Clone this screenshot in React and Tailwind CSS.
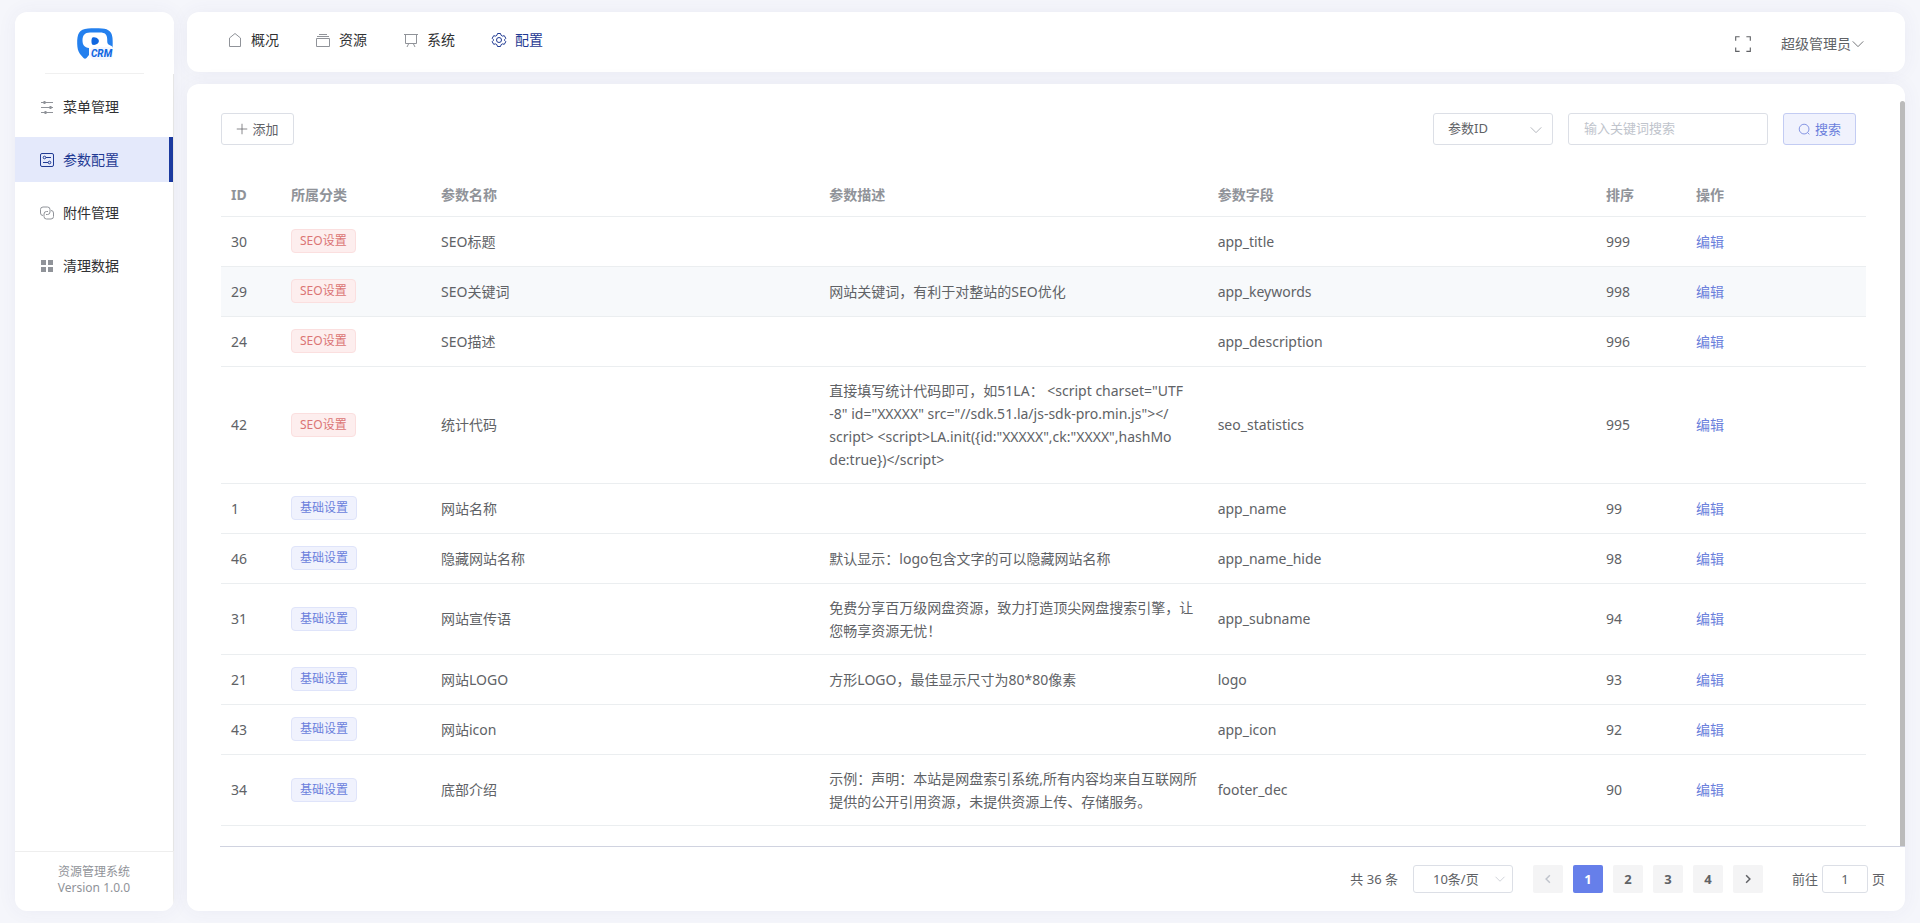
import React, { useState } from 'react';

const NAV_ITEMS = [
  { id: 'overview', label: '概况', icon: HomeIcon },
  { id: 'resource', label: '资源', icon: BoxIcon },
  { id: 'system', label: '系统', icon: BoardIcon },
  { id: 'config', label: '配置', icon: GearIcon },
];

const MENU_ITEMS = [
  { id: 'menu', label: '菜单管理', icon: OperationIcon },
  { id: 'params', label: '参数配置', icon: ParamsIcon },
  { id: 'files', label: '附件管理', icon: LinkIcon },
  { id: 'clean', label: '清理数据', icon: GridIcon },
];

const ROWS = [
  { id: 30, type: 'seo', name: 'SEO标题', desc: '', field: 'app_title', sort: 999 },
  {
    id: 29,
    type: 'seo',
    name: 'SEO关键词',
    desc: '网站关键词，有利于对整站的SEO优化',
    field: 'app_keywords',
    sort: 998,
  },
  { id: 24, type: 'seo', name: 'SEO描述', desc: '', field: 'app_description', sort: 996 },
  {
    id: 42,
    type: 'seo',
    name: '统计代码',
    desc: '直接填写统计代码即可，如51LA： <script charset="UTF\n-8" id="XXXXX" src="//sdk.51.la/js-sdk-pro.min.js"></\nscript> <script>LA.init({id:"XXXXX",ck:"XXXX",hashMo\nde:true})</script>',
    field: 'seo_statistics',
    sort: 995,
  },
  { id: 1, type: 'base', name: '网站名称', desc: '', field: 'app_name', sort: 99 },
  {
    id: 46,
    type: 'base',
    name: '隐藏网站名称',
    desc: '默认显示：logo包含文字的可以隐藏网站名称',
    field: 'app_name_hide',
    sort: 98,
  },
  {
    id: 31,
    type: 'base',
    name: '网站宣传语',
    desc: '免费分享百万级网盘资源，致力打造顶尖网盘搜索引擎，让您畅享资源无忧！',
    field: 'app_subname',
    sort: 94,
  },
  {
    id: 21,
    type: 'base',
    name: '网站LOGO',
    desc: '方形LOGO，最佳显示尺寸为80*80像素',
    field: 'logo',
    sort: 93,
  },
  { id: 43, type: 'base', name: '网站icon', desc: '', field: 'app_icon', sort: 92 },
  {
    id: 34,
    type: 'base',
    name: '底部介绍',
    desc: '示例：声明：本站是网盘索引系统,所有内容均来自互联网所提供的公开引用资源，未提供资源上传、存储服务。',
    field: 'footer_dec',
    sort: 90,
  },
];

function Icon({ className = 'w-4 h-4', children }) {
  return (
    <svg
      className={`shrink-0 ${className}`}
      viewBox="0 0 16 16"
      fill="none"
      stroke="currentColor"
      strokeWidth="1"
      aria-hidden="true"
    >
      {children}
    </svg>
  );
}

function HomeIcon() {
  return (
    <Icon>
      <path d="M2.500 14.500V6L8 1.500 13.500 6v8.500z" />
    </Icon>
  );
}

function BoxIcon() {
  return (
    <Icon>
      <path d="M1.500 6.500h13v8h-13zM2 4.500h12M4 2.500h8" />
    </Icon>
  );
}

function BoardIcon() {
  return (
    <Icon>
      <path d="M1 2.500h14M2.500 2.500v9h11v-9M5.500 12l-1.500 3M10.500 12l1.500 3" />
    </Icon>
  );
}

function GearIcon() {
  return (
    <Icon>
      <path
        strokeLinejoin="round"
        d="M6.500 1.500h3l.6 1.800 1.300.8 1.900-.4 1.500 2.600L13.500 7.700v.6l1.300 1.400-1.500 2.600-1.900-.4-1.300.8-.6 1.800h-3l-.6-1.800-1.300-.8-1.900.4-1.500-2.600L2.500 8.300v-.6L1.200 6.300l1.500-2.600 1.900.4 1.300-.8z"
      />
      <circle cx="8" cy="8" r="2.500" />
    </Icon>
  );
}

function OperationIcon() {
  return (
    <Icon>
      <path d="M2 3.500h12M2 8.500h12M2 13.500h12" />
      <path d="M5.500 2v3M11.500 7v3M6.500 12v3" strokeWidth="2" />
    </Icon>
  );
}

function ParamsIcon() {
  return (
    <Icon>
      <rect x="1.500" y="1.500" width="13" height="13" rx="1.500" />
      <circle cx="5.500" cy="5.500" r="1.300" />
      <circle cx="10.500" cy="10.500" r="1.300" />
      <path d="M7 5.500h5M4 10.500h5" />
    </Icon>
  );
}

function LinkIcon() {
  return (
    <Icon>
      <path d="M4 10.500A2.500 2.500 0 0 1 1.500 8V4.500A2.500 2.500 0 0 1 4 2h4.500A2.500 2.500 0 0 1 11 4.500V7a2.500 2.500 0 0 1-2.500 2.500H7" />
      <path d="M12 5.500A2.500 2.500 0 0 1 14.500 8v3.500A2.500 2.500 0 0 1 12 14H7.500A2.500 2.500 0 0 1 5 11.500V9a2.500 2.500 0 0 1 2.500-2.500H9" />
    </Icon>
  );
}

function GridIcon() {
  return (
    <Icon>
      <path
        d="M2 2h5v5H2zM9 2h5v5H9zM2 9h5v5H2zM9 9h5v5H9z"
        fill="currentColor"
        stroke="none"
      />
    </Icon>
  );
}

function ChevronDown({ className }) {
  return (
    <Icon className={className}>
      <path d="M2 5l6 6 6-6" />
    </Icon>
  );
}

function Logo() {
  return (
    <svg className="w-9 h-8" viewBox="0 0 36 32" role="img" aria-label="CRM">
      <path
        d="M11 .5C15 0 21 0 25 .5 32 1 35 4 35.500 10c.3 4 .3 7 0 11H13l-1 6-2.500 3c-1 1-2 1-3 0L3 26C1 23 .3 20 .2 16 0 6 2 1 11 .5z"
        fill="#2480ee"
      />
      <path
        d="M13 4.500h10c5 0 7 2 7.200 6.500.1 3-.2 4 1.300 5.500l3 1.500c1.500 1 1.500 2 1.500 3v10H12v-11C7.500 19.500 5.500 17 5.500 12.500c0-5 2-8 7.500-8z"
        fill="#fff"
      />
      <path
        d="M15.500 9.500c2-.6 4.500 0 5.800 1.800.8 1.200.8 2.500 0 3.500-1.300 1.700-3.500 2.500-5.800 2-1.200-.5-1.500-6.500 0-7.300z"
        fill="#0f66e0"
      />
      <rect x="13" y="19" width="23" height="13" rx="5" fill="#f3f7ff" />
      <text
        x="14"
        y="29"
        fontSize="10"
        fontWeight="800"
        fontStyle="italic"
        fontFamily="Roboto, sans-serif"
        fill="#1268e2"
      >
        CRM
      </text>
    </svg>
  );
}

function Sidebar({ active, onSelect }) {
  return (
    <aside className="w-[159px] shrink-0 flex flex-col bg-white rounded-xl overflow-hidden shadow-[0_0_20px_rgba(60,70,130,0.06)]">
      <div className="h-[62px] mx-[30px] pt-4 flex justify-center border-b border-[#f0f0f0]">
        <Logo />
      </div>
      <nav className="flex-1 flex flex-col gap-2 pt-[10px] border-r border-[#e6e6e6]">
        {MENU_ITEMS.map(({ id, label, icon: ItemIcon }) => {
          const isActive = id === active;
          return (
            <button
              key={id}
              onClick={() => onSelect(id)}
              className={`h-[45px] pl-6 flex items-center gap-2 border-r-4 cursor-pointer ${
                isActive
                  ? 'bg-[#e4e9fb] border-[#1b3a9f] text-[#1f3a93]'
                  : 'border-transparent text-[#303133]'
              }`}
            >
              <span className={isActive ? '' : 'text-[#909399]'}>
                <ItemIcon />
              </span>
              {label}
            </button>
          );
        })}
      </nav>
      <div className="h-[60px] pt-3 border-t border-r border-[#eeeeee] text-center text-xs leading-4 text-[#909399]">
        <div>资源管理系统</div>
        <div>Version 1.0.0</div>
      </div>
    </aside>
  );
}

function Header({ active, onSelect }) {
  return (
    <header className="h-[60px] shrink-0 pl-10 pr-10 flex items-center justify-between bg-white rounded-xl shadow-[0_0_20px_rgba(60,70,130,0.06)]">
      <nav className="flex gap-9 pb-1">
        {NAV_ITEMS.map(({ id, label, icon: ItemIcon }) => {
          const isActive = id === active;
          return (
            <a
              key={id}
              href={`#${id}`}
              onClick={() => onSelect(id)}
              className={`flex items-center gap-2 ${
                isActive ? 'text-[#1f3a93]' : 'text-[#303133]'
              }`}
            >
              <span className={isActive ? '' : 'text-[#909399]'}>
                <ItemIcon />
              </span>
              {label}
            </a>
          );
        })}
      </nav>
      <div className="flex items-center gap-[29px] pt-1 text-[#606266]">
        <button aria-label="全屏" className="cursor-pointer">
          <Icon className="w-[18px] h-[18px]">
            <path d="M1.500 5V1.500H5M11 1.500h3.500V5M14.500 11v3.500H11M5 14.500H1.500V11" />
          </Icon>
        </button>
        <button className="flex items-center cursor-pointer">
          超级管理员
          <ChevronDown className="w-[14px] h-[14px]" />
        </button>
      </div>
    </header>
  );
}

function Toolbar() {
  return (
    <div className="flex items-center justify-between pr-[10px] text-[13px]">
      <button className="h-8 w-[73px] flex items-center justify-center gap-1 border border-[#dcdfe6] rounded-[3px] bg-white text-[#606266] cursor-pointer">
        <Icon className="w-3 h-3">
          <path d="M8 1v14M1 8h14" />
        </Icon>
        添加
      </button>
      <form className="flex items-center gap-[15px]" onSubmit={(e) => e.preventDefault()}>
        <div className="relative">
          <select
            aria-label="搜索字段"
            className="block appearance-none h-8 w-[120px] pl-[14px] pb-[2px] border border-[#dcdfe6] rounded-[3px] bg-white text-[#606266]"
          >
            <option>参数ID</option>
            <option>参数名称</option>
            <option>参数字段</option>
          </select>
          <ChevronDown className="absolute right-[10px] top-[10px] w-[14px] h-[14px] text-[#a8abb2] pointer-events-none" />
        </div>
        <input
          type="text"
          aria-label="关键词"
          placeholder="输入关键词搜索"
          className="h-8 w-[200px] px-[15px] pb-[2px] border border-[#dcdfe6] rounded-[3px] text-[#606266] placeholder:text-[#c0c4cc]"
        />
        <button
          type="submit"
          className="h-8 w-[73px] flex items-center justify-center gap-1 border border-[#c3ccf3] rounded-[3px] bg-[#f0f2fd] text-[#6b7fdc] cursor-pointer"
        >
          <Icon className="w-[13px] h-[13px]">
            <circle cx="7.500" cy="7.500" r="6" />
            <path d="M12 12l2 2" />
          </Icon>
          搜索
        </button>
      </form>
    </div>
  );
}

function Tag({ type }) {
  return (
    <span
      className={`inline-flex items-center h-6 px-2 border rounded-[4px] text-xs ${
        type === 'seo'
          ? 'bg-[#fdeeee] border-[#fbdfdf] text-[#db7575]'
          : 'bg-[#f0f2fd] border-[#dfe4fa] text-[#6b7fdc]'
      }`}
    >
      {type === 'seo' ? 'SEO设置' : '基础设置'}
    </span>
  );
}

function ParamsTable() {
  return (
    <table className="w-full table-fixed border-collapse text-left leading-[23px] text-[#606266]">
      <colgroup>
        <col className="w-[60px]" />
        <col className="w-[150px]" />
        <col />
        <col />
        <col />
        <col className="w-[90px]" />
        <col className="w-[180px]" />
      </colgroup>
      <thead>
        <tr className="h-[47px] border-b border-[#ebeef0] text-[#909399]">
          {['ID', '所属分类', '参数名称', '参数描述', '参数字段', '排序', '操作'].map((title) => (
            <th key={title} className="px-[10px] pt-1 font-bold">
              {title}
            </th>
          ))}
        </tr>
      </thead>
      <tbody>
        {ROWS.map((row) => (
          <tr
            key={row.id}
            className={`h-[50px] border-b border-[#ebeef0] ${
              row.id === 29 ? 'bg-[#f7f9fb]' : 'hover:bg-[#f7f9fb]'
            }`}
          >
            <td className="px-[10px]">{row.id}</td>
            <td className="px-[10px]">
              <div className="flex">
                <Tag type={row.type} />
              </div>
            </td>
            <td className="px-[10px]">{row.name}</td>
            <td className="px-[10px] py-3 break-all whitespace-pre-line">{row.desc}</td>
            <td className="px-[10px]">{row.field}</td>
            <td className="px-[10px]">{row.sort}</td>
            <td className="px-[10px]">
              <button className="text-[#6b7fdc] cursor-pointer">编辑</button>
            </td>
          </tr>
        ))}
      </tbody>
    </table>
  );
}

function Pagination() {
  const [page, setPage] = useState(1);

  return (
    <div className="h-[65px] shrink-0 ml-[33px] pr-5 flex items-center justify-end text-[13px] text-[#606266] border-t border-[#d0d3e0]">
      <span>共 36 条</span>
      <div className="relative ml-[15px]">
        <select
          aria-label="每页条数"
          className="block appearance-none h-7 w-[100px] pl-[19px] border border-[#dcdfe6] rounded-[3px] bg-white"
        >
          <option>10条/页</option>
          <option>20条/页</option>
          <option>50条/页</option>
        </select>
        <ChevronDown className="absolute right-[7px] top-2 w-3 h-3 text-[#c0c4cc] pointer-events-none" />
      </div>
      <div className="flex gap-[10px] ml-5 mr-[29px] font-bold">
        <button
          aria-label="上一页"
          disabled={page === 1}
          onClick={() => setPage(page - 1)}
          className="w-[30px] h-7 flex items-center justify-center rounded-[2px] bg-[#f4f4f5] disabled:text-[#c0c4cc]"
        >
          <Icon className="w-3 h-3">
            <path d="M10.500 3L5.500 8l5 5" strokeWidth="2" />
          </Icon>
        </button>
        {[1, 2, 3, 4].map((n) => (
          <button
            key={n}
            onClick={() => setPage(n)}
            className={`w-[30px] h-7 rounded-[2px] ${
              n === page ? 'bg-[#667fea] text-white' : 'bg-[#f4f4f5]'
            }`}
          >
            {n}
          </button>
        ))}
        <button
          aria-label="下一页"
          disabled={page === 4}
          onClick={() => setPage(page + 1)}
          className="w-[30px] h-7 flex items-center justify-center rounded-[2px] bg-[#f4f4f5] disabled:text-[#c0c4cc]"
        >
          <Icon className="w-3 h-3">
            <path d="M5.500 3l5 5-5 5" strokeWidth="2" />
          </Icon>
        </button>
      </div>
      <label className="flex items-center gap-1">
        前往
        <input
          type="text"
          value={page}
          onChange={(e) => setPage(Number(e.target.value) || 1)}
          className="w-[46px] h-7 text-center border border-[#dcdfe6] rounded-[3px]"
        />
        页
      </label>
    </div>
  );
}

function App() {
  const [menu, setMenu] = useState('params');
  const [nav, setNav] = useState('config');

  return (
    <div className="min-h-screen flex gap-[13px] px-[15px] py-3 bg-[#f5f6fb] text-sm font-['Noto_Sans','Noto_Sans_CJK_SC',sans-serif]">
      <Sidebar active={menu} onSelect={setMenu} />
      <div className="flex-1 min-w-0 flex flex-col gap-3">
        <Header active={nav} onSelect={setNav} />
        <main className="flex-1 flex flex-col bg-white rounded-xl shadow-[0_0_20px_rgba(60,70,130,0.06)]">
          <div className="flex-1 flex pt-[17px]">
            <div className="flex-1 min-w-0 flex flex-col gap-6 pt-3 pl-[34px] pr-[34px]">
              <Toolbar />
              <ParamsTable />
            </div>
            {/* 滚动条 */}
            <div className="w-[5px] rounded-t-sm bg-[#bbbbbb]"></div>
          </div>
          <Pagination />
        </main>
      </div>
    </div>
  );
}

export default App;
